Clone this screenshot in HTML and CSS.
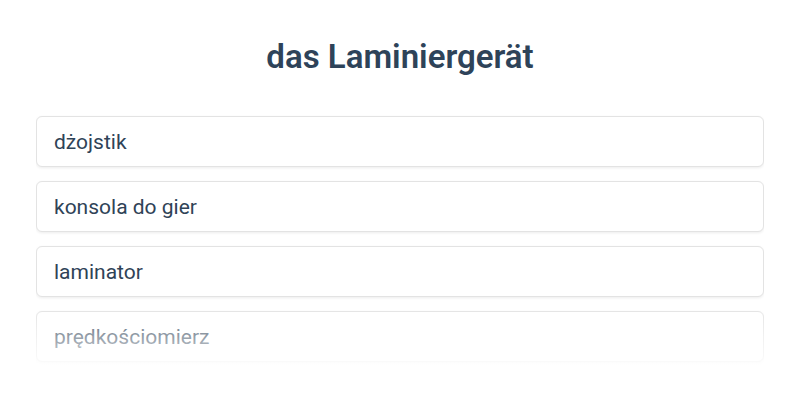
FILE: index.html
```html
<!DOCTYPE html>
<html lang="de">
<head>
<meta charset="utf-8">
<link rel="stylesheet" href="styles.css">
</head>
<body>
<main class="quiz">
  <h1 class="title">das Laminiergerät</h1>
  <div class="options">
    <div class="option">dżojstik</div>
    <div class="option">konsola do gier</div>
    <div class="option">laminator</div>
    <div class="option">prędkościomierz</div>
    <div class="fade"></div>
  </div>
</main>
</body>
</html>
```
FILE: styles.css
```css
html, body {
  margin: 0;
  padding: 0;
  background: #ffffff;
  font-family: Roboto, "Noto Sans", sans-serif;
  color: #2f4357;
}
.quiz {
  padding: 0 36px;
}
.title {
  margin: 0;
  padding-top: 37px;
  height: 78px;
  box-sizing: border-box;
  text-align: center;
  font-size: 33px;
  font-weight: 600;
  line-height: 40px;
  color: #2e4359;
}
.options {
  position: relative;
  display: flex;
  flex-direction: column;
  gap: 14px;
  height: 250px;
  overflow: hidden;
  padding-top: 38px;
  padding-bottom: 10px;
}
.option {
  flex: none;
  height: 51px;
  box-sizing: border-box;
  border: 1px solid #e3e3e3;
  border-radius: 6px;
  box-shadow: 0 1px 3px rgba(0, 0, 0, 0.08);
  background: #fff;
  padding: 0 17px;
  display: flex;
  align-items: center;
  font-size: 21px;
}
.fade {
  position: absolute;
  left: 0;
  right: 0;
  bottom: 0;
  height: 70px;
  background: linear-gradient(to bottom, rgba(255,255,255,0) 0%, rgba(255,255,255,0.45) 40%, #fff 100%);
  pointer-events: none;
}
```
